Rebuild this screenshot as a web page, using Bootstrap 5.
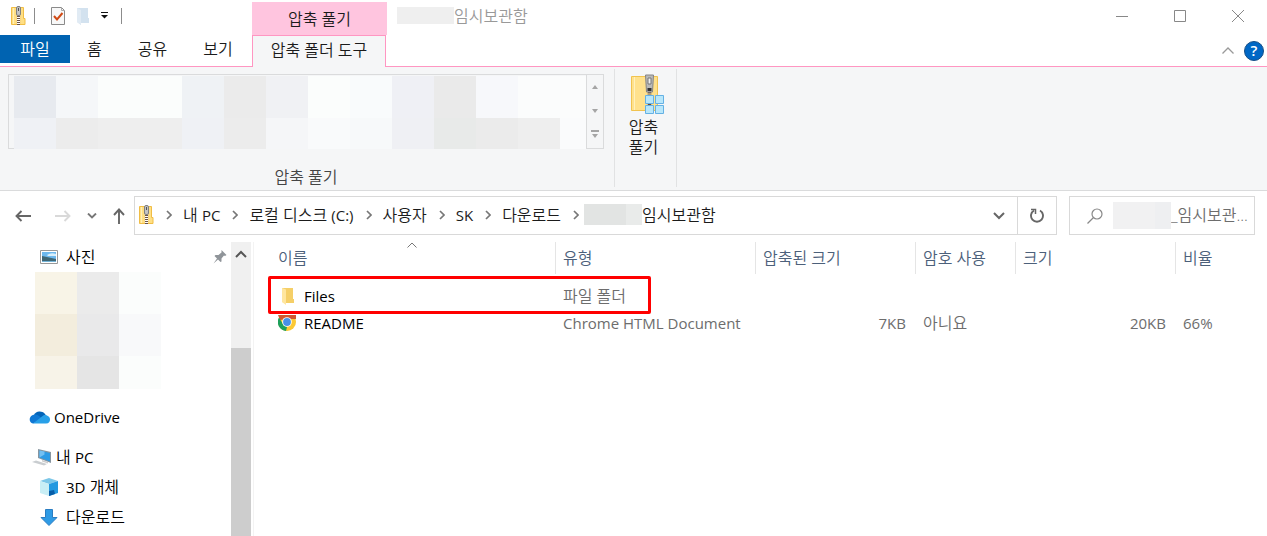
<!DOCTYPE html>
<html lang="ko">
<head>
<meta charset="utf-8">
<meta name="viewport" content="width=device-width, initial-scale=1">
<title>임시보관함</title>
<link href="https://cdn.jsdelivr.net/npm/bootstrap@5.3.0/dist/css/bootstrap.min.css" rel="stylesheet">
<style>
  body { font: 350 16px/20px "Open Sans", "Noto Sans CJK KR", sans-serif; color: #1b1b1b; background: #fff; }
  a, a:hover { color: inherit; text-decoration: none; }
  button { background: none; border: 0; padding: 0; color: inherit; font: inherit; }
  svg { display: block; flex: none; }
  .latin { font-size: 15px; font-weight: 400; }
  .title-row { height: 35px; }
  .quick-bar { width: 252px; padding-left: 11px; }
  .quick-bar .split { width: 1px; height: 16px; background: #8c8c8c; }
  .quick-bar .split:last-child { margin-left: 13px; }
  .context-title { width: 135px; background: #ffc5df; margin-top: 2px; }
  .win-title { color: #999; padding-left: 10px; }
  .win-title .blur-box { width: 57px; height: 17px; background: #efefef; }
  .win-btn { width: 58px; height: 32px; }
  .tab-row { height: 32px; border-bottom: 1px solid #ff96c2; }
  .tab-row .tab { display: flex; align-items: center; justify-content: center; height: 28px; padding: 0 17px; }
  .main-tabs { width: 252px; gap: 2px; }
  .tab-row .file-tab { width: 70px; margin-right: -2px; background: #0063b1; color: #fff; }
  .tab-row .tool-tab { width: 134px; height: 32px; padding: 0 0 3px; border: 1px solid #ff96c2; border-bottom: 0; background: #f5f6f7; white-space: nowrap; }
  .tab-tools { padding-right: 3px; }
  .ribbon { height: 124px; background: #f5f6f7; border-bottom: 1px solid #dadbdc; padding: 2px 0 3px 8px; }
  .ribbon-group { border-right: 1px solid #e1e2e3; }
  .gallery { width: 596px; height: 75px; margin: 5px 10px 0 0; border: 1px solid #dadbdc; }
  .mosaic { display: grid; grid-template-columns: repeat(13, 42px) 1fr; grid-template-rows: 42px 31px; }
  .gallery .mosaic { flex: 1; margin: 1px 0 0 5px; }
  .gallery-steps { width: 17px; border-left: 1px solid #dadbdc; }
  .group-label { color: #444; width: 596px; padding-top: 18px; }
  .extract-btn { width: 61px; padding: 5px 4px 0 0; }
  .extract-btn svg { margin: 0 8px 3px auto; }
  .nav-row { padding: 5px 12px 7px 11px; }
  .nav-keys { width: 123px; }
  .field-box { height: 39px; border: 1px solid #d9d9d9; }
  .crumbs { padding-bottom: 2px; }
  .crumbs .sep-mark { margin: 0 11px 0 12px; }
  .crumbs .sep-last { margin-right: 5px; }
  .crumb-blur { width: 58px; height: 21px; background: linear-gradient(90deg, #e2e4e3 42px, #e9ebea 42px); }
  .search-blur { width: 58px; height: 27px; background: linear-gradient(90deg, #f1f1f2 42px, #eeeff1 42px); }
  .refresh { width: 39px; border-left: 1px solid #d9d9d9; }
  .search-box { width: 186px; margin-left: 12px; }
  .search-box svg { margin: 0 10px 0 17px; }
  .search-box input { width: 80px; border: 0; padding: 0 0 2px; outline: 0; background: none; font: inherit; color: #6d6d6d; }
  .search-box input::placeholder { color: #6d6d6d; opacity: 1; }
  .side { width: 231px; }
  .side-item { height: 30px; display: flex; align-items: center; color: #000; }
  .side-item.drive { margin-bottom: 10px; }
  .side .mosaic { grid-template-columns: repeat(3, 42px); grid-template-rows: 42px 42px 33px; margin: 0 0 13px 35px; }
  .scroll { width: 20px; background: #f0f0f0; }
  .scroll-up { height: 24px; }
  .scroll-thumb { margin-top: 82px; background: #cdcdcd; }
  .listing { margin-left: 2px; border-left: 1px solid #f3f3f3; }
  .files { width: 100%; table-layout: fixed; border-collapse: separate; border-spacing: 0; color: #6d6d6d; }
  .files th { height: 32px; padding: 0 0 0 7px; font-weight: 350; color: #4c607a; border-right: 1px solid #e5e5e5; }
  .files th:last-child { border: 0; }
  .files th:first-child, .files td:first-child { padding-left: 24px; }
  .files tbody::before { content: ""; display: block; height: 8px; }
  .files td { height: 27px; padding: 0 9px 0 7px; white-space: nowrap; }
  .files td.num { text-align: right; padding-right: 10px; }
  .files a { color: #000; }
  .sort-mark { position: absolute; left: 153px; top: 0; }
  .highlight { position: absolute; left: 14px; top: 34px; width: 383px; height: 38px; border: 3px solid #f00; border-radius: 2px; pointer-events: none; }
</style>
</head>
<body class="d-flex flex-column vh-100 overflow-hidden">
<svg width="0" height="0" class="position-absolute" aria-hidden="true">
  <symbol id="zip" viewBox="0 0 15 20">
    <path d="M.5 1.500h12v11h1.500v6H.5z" fill="#ffdf84" stroke="#f0bd45"/>
    <path d="M2.500 2v16" stroke="#fff0b8"/>
    <path d="M5.500 1h4v17h-4z" fill="#f2cf83"/>
    <path d="M7.500 8v11" stroke="#fff" stroke-width="3"/>
    <path d="M7.500 8v11" stroke="#6b5246" stroke-width="3" stroke-dasharray="1 1"/>
    <rect x="5.500" y=".5" width="4" height="9" rx="1.500" fill="#c4c4c4" stroke="#808080"/>
    <path d="M7.500 2v3" stroke="#555"/>
  </symbol>
  <symbol id="chev" viewBox="0 0 6 10"><path d="M1 1l4 4-4 4" fill="none" stroke="#777" stroke-width="1.700"/></symbol>
</svg>

<header>
  <div class="title-row d-flex">
    <div class="quick-bar d-flex align-items-center pb-1">
      <svg width="15" height="20"><use href="#zip"/></svg>
      <span class="split ms-2"></span>
      <button aria-label="속성" class="ms-3"><svg width="14" height="18" viewBox="0 0 14 18"><path d="M.5.5h10l3 3v14H.5z" fill="#f8f8f8" stroke="#8a8a8a"/><path d="M10.500.5v3h3" fill="none" stroke="#aaa"/><path d="M3 9l3 3.500L11.500 6" fill="none" stroke="#d04a15" stroke-width="2"/></svg></button>
      <button aria-label="새 폴더" class="ms-2 ps-1"><svg width="12" height="18" viewBox="0 0 12 18"><path d="M0 1h11v10h1v5H4v2l-4-3z" fill="#d3e2ef"/><path d="M0 1l4 2v15l-4-3z" fill="#e1ebf4"/></svg></button>
      <button aria-label="사용자 지정" class="ms-2 ps-1"><svg width="7" height="7" viewBox="0 0 7 7"><path d="M0 .5h7" stroke="#111"/><path d="M0 3h7L3.500 6.500z" fill="#111"/></svg></button>
      <span class="split"></span>
    </div>
    <div class="context-title d-flex align-items-center justify-content-center">압축 풀기</div>
    <div class="win-title d-flex align-items-center pb-1"><span class="blur-box"></span>임시보관함</div>
    <div class="ms-auto d-flex">
      <button class="win-btn d-flex align-items-center justify-content-center" aria-label="최소화"><svg width="12" height="12"><path d="M0 6.500h12" stroke="#888"/></svg></button>
      <button class="win-btn d-flex align-items-center justify-content-center" aria-label="최대화"><svg width="12" height="12"><path d="M.5.5h11v11H.5z" fill="none" stroke="#888"/></svg></button>
      <button class="win-btn d-flex align-items-center justify-content-center" aria-label="닫기"><svg width="12" height="12"><path d="M0 0l12 12M12 0L0 12" stroke="#888"/></svg></button>
    </div>
  </div>
  <nav class="tab-row d-flex">
    <div class="main-tabs d-flex">
      <a href="#" class="tab file-tab">파일</a>
      <a href="#" class="tab">홈</a>
      <a href="#" class="tab">공유</a>
      <a href="#" class="tab">보기</a>
    </div>
    <a href="#" class="tab tool-tab">압축 폴더 도구</a>
    <div class="tab-tools d-flex flex-grow-1 justify-content-end align-items-center gap-2">
      <button aria-label="리본 최소화"><svg width="14" height="7"><path d="M.5 6.500L6 1l5.500 5.500" fill="none" stroke="#999" stroke-width="1.300"/></svg></button>
      <button aria-label="도움말"><svg width="20" height="20"><circle cx="10" cy="10" r="9.500" fill="#0067c5" stroke="#174f86"/><text x="10" y="15" text-anchor="middle" fill="#fff" font-size="15" font-weight="600">?</text></svg></button>
    </div>
  </nav>
</header>

<section class="ribbon d-flex">
  <div class="ribbon-group">
    <div class="gallery d-flex">
      <div class="mosaic">
        <i style="background:#e7eaef"></i><i style="background:#f5f7f9"></i><i style="background:#fbfdfc"></i><i style="background:#fbfdfc"></i><i style="background:#eff2f5"></i><i style="background:#ebebeb"></i><i style="background:#f0f1f4"></i><i style="background:#fbfdfc"></i><i style="background:#f9fbfc"></i><i style="background:#eff0f5"></i><i style="background:#eaeaea"></i><i style="background:#f7f8fb"></i><i style="background:#fbfcfc"></i><i style="background:#fbfcfc"></i>
        <i style="background:#eff1f5"></i><i style="background:#ececec"></i><i style="background:#eeeeee"></i><i style="background:#eeeeee"></i><i style="background:#eff1f5"></i><i style="background:#ececec"></i><i style="background:#f5f6f8"></i><i style="background:#f9fafb"></i><i style="background:#f7f9fa"></i><i style="background:#eff0f4"></i><i style="background:#e8eae9"></i><i style="background:#ebebeb"></i><i style="background:#eeeeee"></i><i style="background:#fafbfc"></i>
      </div>
      <div class="gallery-steps d-flex flex-column align-items-center justify-content-between py-2">
        <button aria-label="위로"><svg width="6" height="8"><path d="M0 6l3-4 3 4z" fill="#a5a5a5"/></svg></button>
        <button aria-label="아래로"><svg width="6" height="4"><path d="M0 0h6L3 4z" fill="#a5a5a5"/></svg></button>
        <button aria-label="더 보기"><svg width="8" height="10"><path d="M0 0h8v2H0zM1 4h6L4 8z" fill="#a5a5a5"/></svg></button>
      </div>
    </div>
    <div class="group-label text-center">압축 풀기</div>
  </div>
  <div class="ribbon-group">
    <button class="extract-btn">
      <svg width="34" height="40" viewBox="0 0 34 40">
        <path d="M1.500 2.500h26v34h-26z" fill="#ffe18c" stroke="#f1c34f"/><path d="M4.500 3v33" stroke="#fff1bd"/>
        <path d="M19.500 18v18" stroke="#b39c77" stroke-width="4"/><path d="M19.500 18v18" stroke="#5f4a40" stroke-width="3" stroke-dasharray="1 2"/>
        <path d="M15.500 1h8l-1 17h-6z" fill="#b9b9b9" stroke="#858585"/><path d="M18 4h3v6h-3z" fill="#eee" stroke="#777"/><path d="M17.500 14h4v3h-4z" fill="#333"/>
        <path d="M15.500 21.500h8v8h-8zM25.500 21.500h8v8h-8zM15.500 31.500h8v8h-8zM25.500 31.500h8v8h-8z" fill="#b9e7fa" stroke="#65b1e4"/>
      </svg>
      압축<br>풀기
    </button>
  </div>
</section>

<div class="nav-row d-flex align-items-center">
  <div class="nav-keys d-flex align-items-center">
    <button aria-label="뒤로" class="ms-1"><svg width="16" height="12"><path d="M16 6H1.500M6.500 1l-5 5 5 5" fill="none" stroke="#666" stroke-width="1.900"/></svg></button>
    <button aria-label="앞으로" class="ms-4"><svg width="16" height="12"><path d="M0 6h14.500M9.500 1l5 5-5 5" fill="none" stroke="#d9d9d9" stroke-width="1.900"/></svg></button>
    <button aria-label="최근 위치" class="ms-3"><svg width="10" height="6"><path d="M1 .5l4 4 4-4" fill="none" stroke="#777" stroke-width="1.900"/></svg></button>
    <button aria-label="위로" class="ms-3"><svg width="12" height="16"><path d="M6 16V1.500M1 7l5-5.500L11 7" fill="none" stroke="#666" stroke-width="1.900"/></svg></button>
  </div>
  <div class="field-box flex-grow-1 d-flex align-items-center">
    <nav class="crumbs d-flex align-items-center flex-grow-1 ps-1">
      <svg width="15" height="20"><use href="#zip"/></svg>
      <svg class="sep-mark" width="6" height="10"><use href="#chev"/></svg><a href="#">내 <span class="latin">PC</span></a>
      <svg class="sep-mark" width="6" height="10"><use href="#chev"/></svg><a href="#">로컬 디스크 <span class="latin">(C:)</span></a>
      <svg class="sep-mark" width="6" height="10"><use href="#chev"/></svg><a href="#">사용자</a>
      <svg class="sep-mark" width="6" height="10"><use href="#chev"/></svg><a href="#" class="latin">SK</a>
      <svg class="sep-mark" width="6" height="10"><use href="#chev"/></svg><a href="#">다운로드</a>
      <svg class="sep-mark sep-last" width="6" height="10"><use href="#chev"/></svg><span class="crumb-blur"></span><a href="#">임시보관함</a>
    </nav>
    <button class="px-2 me-1" aria-label="이전 위치"><svg width="12" height="8"><path d="M1 1l5 5 5-5" fill="none" stroke="#666" stroke-width="2"/></svg></button>
    <button class="refresh h-100 d-flex align-items-center justify-content-center" aria-label="새로 고침"><svg width="14" height="15" viewBox="0 0 14 15"><path d="M10 2.500a6 6 0 1 1-6 0" fill="none" stroke="#666" stroke-width="1.900"/><path d="M1 1.500h4.500V6" fill="none" stroke="#666" stroke-width="1.500"/></svg></button>
  </div>
  <div class="field-box search-box d-flex align-items-center">
    <svg width="16" height="16"><circle cx="10" cy="6" r="5" fill="none" stroke="#888" stroke-width="1.200"/><path d="M6.500 9.500L.5 15.500" stroke="#888" stroke-width="1.300"/></svg>
    <span class="search-blur flex-shrink-0"></span><input type="text" aria-label="검색" placeholder="_임시보관...">
  </div>
</div>

<main class="d-flex flex-grow-1 overflow-hidden">
  <aside class="side flex-shrink-0">
    <a href="#" class="side-item ps-4"><svg width="18" height="14" class="ms-3 me-2"><path d="M.5.5h17v13H.5z" fill="#fff" stroke="#999"/><path d="M2 2h14v10H2z" fill="#6db8ee"/><path d="M7 5q4-3 9-1v2H8z" fill="#d9effa"/><path d="M2 6l5 1 9 2v3H2z" fill="#3f6674"/><path d="M2 11h14v1H2z" fill="#73b4d8"/></svg>사진
      <svg width="14" height="14" class="ms-auto me-1"><path d="M8.500 0L13.500 5l-1.500 1-1-.5-2.500 3v3L7.500 12 5 9.500.5 13.500 4 8.500 1.500 6l1-1h3l3-2.500z" fill="#8f9499"/></svg></a>
    <div class="mosaic">
      <i style="background:#f8f4e7"></i><i style="background:#ebebeb"></i><i style="background:#fbfdfc"></i>
      <i style="background:#f3eddd"></i><i style="background:#e9e9ea"></i><i style="background:#f8f9fa"></i>
      <i style="background:#f7f3e8"></i><i style="background:#e5e5e5"></i><i style="background:#fbfdfc"></i>
    </div>
    <a href="#" class="side-item drive latin ps-4"><svg width="22" height="14" viewBox="-1 0 22 14" class="ms-1 me-1"><path d="M5 5a6.500 6.500 0 0 1 11-1l2 3-7 4-7-3z" fill="#0364b8"/><path d="M6 4.500c3 0 5 2 8 5L4 13.500C-.5 13-1 5 6 4.500z" fill="#0f78d4"/><path d="M15 5c2-.5 6 1 6 4.500 0 2-1 4-4 4H4l9-7z" fill="#28a0e8"/></svg>OneDrive</a>
    <a href="#" class="side-item ps-4"><svg width="20" height="17" class="ms-2 me-1"><path d="M6 0l13 3v11L6 9z" fill="#8795a0"/><path d="M7.500 1.500L18 4v8.500l-10.500-4z" fill="#2e9be5"/><path d="M7.500 1.500l5 1v3l-5 3z" fill="#74c0f2"/><path d="M10 11l6 2v1.500l-6-2z" fill="#ccc"/><path d="M0 13l4-1.500 11 3.500-3 1.500z" fill="#c9cdd0"/></svg>내&nbsp;<span class="latin">PC</span></a>
    <a href="#" class="side-item ps-4"><svg width="18" height="18" class="ms-3 me-2"><path d="M9 0l9 3-9 3-9-3z" fill="#7cc7e8"/><path d="M0 3l9 3v12l-9-3z" fill="#c8eef5"/><path d="M18 3L9 6v12l9-3z" fill="#2499e0"/><path d="M9 13l5-1 1 4-6 2z" fill="#075da8"/></svg><span class="latin">3D</span>&nbsp;개체</a>
    <a href="#" class="side-item ps-4"><svg width="18" height="17" class="ms-3 me-2"><path d="M5.500.5h7v8H17l-8 8-8-8h4.500z" fill="#2f9be5" stroke="#2a7dc2"/></svg>다운로드</a>
  </aside>
  <div class="scroll flex-shrink-0 d-flex flex-column">
    <button class="scroll-up d-flex align-items-center justify-content-center" aria-label="위로 스크롤"><svg width="12" height="8"><path d="M1 7l5-5 5 5" fill="none" stroke="#555" stroke-width="2"/></svg></button>
    <div class="scroll-thumb flex-grow-1"></div>
  </div>
  <section class="listing flex-grow-1 position-relative">
    <table class="files">
      <colgroup><col style="width:302px"><col style="width:200px"><col style="width:160px"><col style="width:100px"><col style="width:160px"><col></colgroup>
      <thead><tr><th scope="col">이름</th><th scope="col">유형</th><th scope="col">압축된 크기</th><th scope="col">암호 사용</th><th scope="col">크기</th><th scope="col">비율</th></tr></thead>
      <tbody>
        <tr><td><a href="#" class="latin d-flex align-items-center"><svg width="18" height="18" class="me-2"><path d="M4 1h11v11h1v4H8l-4-1z" fill="#f5cf68"/><path d="M4 1l4 1.500V18l-4-3z" fill="#ffe69f"/></svg>Files</a></td><td>파일 폴더</td><td></td><td></td><td></td><td></td></tr>
        <tr><td><a href="#" class="latin d-flex align-items-center"><svg width="18" height="16" viewBox="0 1 18 16" class="me-2"><circle cx="9" cy="8" r="9" fill="#fcc934"/><path d="M0 1h18v4H9L2 6z" fill="#d0562f"/><path d="M1 3.500L5.500 11 9 13l-1 4A9 9 0 0 1 1 3.500z" fill="#1da05b"/><circle cx="9" cy="8" r="4.800" fill="#fff"/><circle cx="9" cy="8" r="3.900" fill="#4790e8"/></svg>README</a></td><td class="latin">Chrome HTML Document</td><td class="num latin">7KB</td><td>아니요</td><td class="num latin">20KB</td><td class="latin">66%</td></tr>
      </tbody>
    </table>
    <svg class="sort-mark" width="10" height="6"><path d="M.5 5.500L5 1l4.500 4.500" fill="none" stroke="#777"/></svg>
    <div class="highlight"></div>
  </section>
</main>
<script src="https://cdn.jsdelivr.net/npm/bootstrap@5.3.0/dist/js/bootstrap.bundle.min.js"></script>
</body>
</html>
